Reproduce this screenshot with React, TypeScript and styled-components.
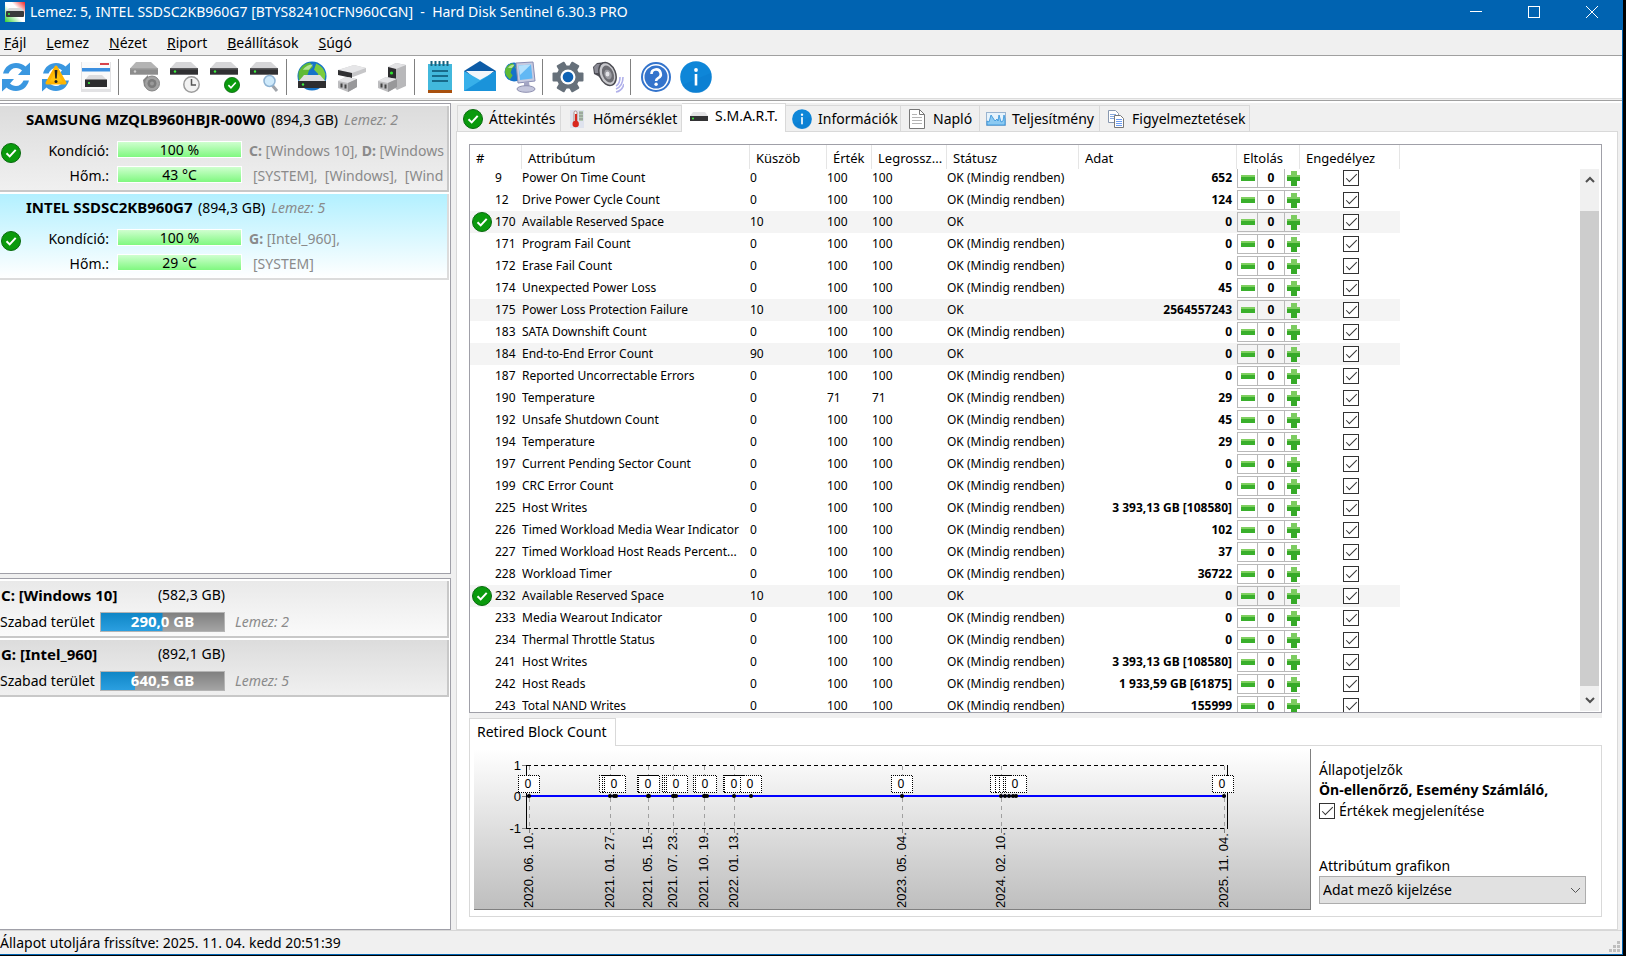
import React, { useEffect, useId, useRef, useState } from 'react';
import styled, { createGlobalStyle, css } from 'styled-components';

const GlobalStyle = createGlobalStyle`
  *, *::before, *::after { box-sizing: border-box; }
  body {
    margin: 0;
    background: #000;
    color: #000;
    font: 14px/20px "Noto Sans", "Open Sans", sans-serif;
  }
  button, select, input { font: inherit; color: inherit; margin: 0; }
  button { background: none; border: 0; padding: 0; }
`;

/* ---------- window frame ---------- */

const Window = styled.div`
  display: flex;
  flex-direction: column;
  height: calc(100vh - 1px);
  min-height: 720px;
  margin: 0 3px 1px 0;
  background: #f0f0f0;
  border-right: 1px solid #0063b1;
  border-bottom: 1px solid #0063b1;
  overflow: hidden;
`;

const TitleBar = styled.header`
  display: flex;
  align-items: center;
  height: 30px;
  padding: 0 1px 6px 5px;
  background: #0063b1;
  color: #fff;
`;

const Title = styled.h1`
  flex: 1;
  margin: 0 0 0 5px;
  font-size: 14px;
  font-weight: 400;
  line-height: 24px;
  white-space: pre;
`;

const WindowButton = styled.button`
  display: grid;
  place-items: center;
  width: 58px;
  height: 22px;
`;

const MenuBar = styled.nav`
  display: flex;
  gap: 20px;
  height: 26px;
  padding: 0 4px;
  border-bottom: 1px solid #a0a0a0;
`;

const MenuButton = styled.button`
  line-height: 24px;
  white-space: nowrap;
  &::first-letter { text-decoration: underline; }
`;

const Toolbar = styled.div`
  display: flex;
  align-items: center;
  height: 42px;
  background: #fff;
`;

const ToolGroup = styled.div`
  display: flex;
  align-items: center;
  gap: 8px;
  height: 36px;
  padding-right: 6px;
  margin-right: 9px;
  border-right: 1px solid #808080;
  &:last-child { border: 0; }
`;

const ToolButton = styled.button`
  width: 32px;
  height: 32px;
  svg { display: block; }
`;

const ToolbarEdge = styled.div`
  height: 5px;
  border-top: 1px solid #dcdcdc;
  border-bottom: 2px solid #fff;
  background: linear-gradient(#f0f0f0 1px, #a0a0a0 1px);
`;

const Workspace = styled.main`
  display: flex;
  flex: 1;
  min-height: 0;
`;

const StatusBar = styled.footer`
  display: flex;
  justify-content: space-between;
  align-items: flex-end;
  height: 24px;
  border-top: 1px solid #d7d7d7;
`;

const StatusText = styled.span`
  line-height: 22px;
  white-space: nowrap;
`;

/* ---------- left column ---------- */

const Sidebar = styled.aside`
  display: flex;
  flex-direction: column;
  gap: 4px;
  flex: none;
  width: 451px;
`;

const ListPane = styled.section<{ $grow: number }>`
  flex: ${(p) => p.$grow} 1 0;
  min-height: 0;
  border: 1px solid #a0a0a8;
  border-left: 0;
  background: #fff;
  overflow: hidden;
`;

const cardFrame = css`
  margin: 2px 1px 0 0;
  border-right: 2px solid #c8c8c8;
  border-bottom: 2px solid #c8c8c8;
  white-space: nowrap;
  overflow: hidden;
`;

const DiskCard = styled.article<{ $selected?: boolean }>`
  ${cardFrame}
  display: grid;
  grid-template-columns: 21px 87px 123px 1fr;
  grid-template-rows: 32px 25px 25px;
  align-items: center;
  height: 86px;
  padding-left: 1px;
  background: ${(p) => (p.$selected ? 'linear-gradient(#b2f0ff, #fff)' : 'linear-gradient(#dcdcdc, #f0f0f0)')};
  border-color: ${(p) => (p.$selected ? '#dcdcdc' : '#c8c8c8')};
`;

const DiskTitle = styled.h2`
  grid-column: 1 / -1;
  margin: 0 0 6px 25px;
  font-size: 14px;
  font-weight: 400;
  word-spacing: normal;
  strong { font-size: 15px; margin-right: 2px; }
`;

const DiskState = styled.span`
  grid-row: 2 / 4;
  grid-column: 1;
  align-self: start;
  padding-top: 5px;
  height: 25px;
  svg { display: block; }
`;

const DiskLabel = styled.span`
  grid-column: 2;
  text-align: right;
`;

const LevelBar = styled.span`
  height: 17px;
  margin: 0 0 2px 8px;
  border: 1px solid #fff;
  background: linear-gradient(#cfffcf, #80f880);
  text-align: center;
  line-height: 15px;
  width: 125px;
`;

const Letters = styled.span<{ $indent?: boolean }>`
  padding-left: ${(p) => (p.$indent ? 21 : 17)}px;
  color: #8a8a8a;
  white-space: pre;
  overflow: hidden;
`;

const Muted = styled.em`
  color: #8a8a8a;
  margin-left: 6px;
`;

const VolumeCard = styled.article<{ $light?: boolean }>`
  ${cardFrame}
  display: grid;
  grid-template-columns: 100px 125px 1fr;
  grid-template-rows: 28px 27px;
  align-items: center;
  height: 57px;
  background: ${(p) => (p.$light ? 'linear-gradient(#e9e9e9, #fafafa)' : 'linear-gradient(#dcdcdc, #f0f0f0)')};
`;

const VolumeName = styled.strong`
  padding-left: 1px;
  font-size: 15px;
`;

const VolumeSize = styled.span`
  text-align: right;
`;

const SpaceBar = styled.span<{ $used: number }>`
  height: 20px;
  border: 1px solid #b4b4b4;
  background:
    linear-gradient(#0f86c6, #2b9fe0) 0 0 / ${(p) => p.$used}% 100% no-repeat,
    linear-gradient(#808080, #a4a4a4);
  color: #fff;
  font-weight: 700;
  font-size: 15px;
  line-height: 17px;
  text-align: center;
`;

const VolumeDisk = styled(Muted)`
  margin-left: 10px;
`;

/* ---------- right column ---------- */

const Detail = styled.section`
  display: flex;
  flex-direction: column;
  flex: 1;
  min-width: 0;
  margin-left: 5px;
  padding-right: 4px;
`;

const TabList = styled.div`
  display: flex;
  align-items: flex-end;
  height: 28px;
  padding-left: 1px;
`;

const Tab = styled.button<{ $width: number }>`
  display: flex;
  align-items: center;
  gap: 6px;
  width: ${(p) => p.$width}px;
  height: 26px;
  padding: 0 0 0 6px;
  border: 1px solid #d9d9d9;
  border-width: 1px 1px 0 0;
  white-space: nowrap;
  svg { flex: none; }
  &:first-child { border-left-width: 1px; padding-left: 5px; }
  &[aria-selected='true'] {
    position: relative;
    height: 29px;
    margin-bottom: -1px;
    padding: 0 0 4px 7px;
    background: #fff;
  }
`;

const TabPage = styled.div`
  display: flex;
  flex-direction: column;
  flex: 1;
  min-height: 0;
  padding: 12px 15px 12px 12px;
  border: 1px solid #d9d9d9;
  background: #fff;
`;

const TableFrame = styled.div`
  display: flex;
  flex: 1;
  min-height: 0;
  border: 1px solid #a0a0a8;
`;

const TableView = styled.div`
  flex: 1;
  overflow: hidden;
`;

const Attributes = styled.table`
  width: 930px;
  table-layout: fixed;
  border-collapse: separate;
  border-spacing: 0;
  font-size: 12px;
  line-height: 20px;
  white-space: nowrap;
`;

const HeadCell = styled.th`
  position: sticky;
  top: 0;
  z-index: 1;
  height: 24px;
  padding: 2px 0 0 6px;
  background: #fff;
  border-right: 1px solid #e5e5e5;
  font-size: 13px;
  font-weight: 400;
  text-align: left;
`;

const Row = styled.tr<{ $shaded: boolean }>`
  height: 22px;
  background: ${(p) => (p.$shaded ? '#f4f4f4' : '#fff')};
`;

const Cell = styled.td`
  padding: 0;
  overflow: hidden;
  text-overflow: ellipsis;
`;

const NumberLine = styled.span`
  display: grid;
  grid-template-columns: 20px 1fr;
  gap: 3px;
  height: 22px;
  padding-left: 2px;
  align-items: center;
  svg { display: block; }
`;

const NumberText = styled.span`
  grid-column: 2;
`;

const DataCell = styled(Cell)`
  padding-right: 5px;
  text-align: right;
  font-weight: 700;
`;

const PlainCell = styled(Cell)`
  text-align: center;
`;

const CheckCell = styled(Cell)`
  padding: 0 0 1px 2px;
  text-align: center;
`;

const Stepper = styled.div`
  display: grid;
  grid-template-columns: 20px 27px 19px;
  height: 20px;
  width: 66px;
  font-weight: 700;
`;

const StepPart = styled.span`
  border: 1px solid #b9b9b9;
  border-right: 0;
  line-height: 18px;
`;

const StepButton = styled.button`
  display: grid;
  place-items: center;
  border: 1px solid #b9b9b9;
  border-right: 0;
`;

const Check = styled.input.attrs({ type: 'checkbox' })`
  appearance: none;
  display: inline-grid;
  place-items: center;
  flex: none;
  width: 16px;
  height: 16px;
  border: 1px solid #333;
  background: #fff;
  vertical-align: middle;
  &:checked::after {
    content: '';
    width: 11px;
    height: 5px;
    margin-top: -4px;
    border: solid #333;
    border-width: 0 0 1px 1px;
    transform: rotate(-45deg);
  }
`;

const Scrollbar = styled.div`
  display: flex;
  flex-direction: column;
  width: 19px;
  margin: 24px 2px 1px 0;
  background: #f0f0f0;
`;

const ScrollButton = styled.button`
  display: grid;
  place-items: center;
  height: 21px;
`;

const ScrollTrack = styled.div`
  flex: 1;
  padding: 21px 0 4px;
`;

const ScrollThumb = styled.div`
  height: 100%;
  background: #cdcdcd;
`;

const Splitter = styled.div`
  height: 5px;
  background: #f0f0f0;
`;

const GraphTabs = styled.div`
  height: 27px;
  display: flex;
`;

const GraphTab = styled.button`
  position: relative;
  height: 28px;
  padding: 0 8px 2px 7px;
  border: 1px solid #d9d9d9;
  border-bottom: 0;
  background: #fff;
`;

const GraphPanel = styled.section`
  display: flex;
  height: 172px;
  padding: 3px 0 0 4px;
  border: 1px solid #d9d9d9;
`;

const ChartArea = styled.div`
  flex: 1;
  min-width: 0;
  height: 161px;
  border-right: 1px solid #808080;
  border-bottom: 1px solid #808080;
  background: linear-gradient(#fff, #bebebe);
  overflow: hidden;
  svg { display: block; }
`;

const GraphSide = styled.div`
  display: flex;
  flex-direction: column;
  flex: none;
  width: 290px;
  padding: 11px 15px 0 8px;
  white-space: nowrap;
`;

const CheckLabel = styled.label`
  display: flex;
  align-items: center;
  gap: 4px;
  height: 22px;
`;

const SelectLabel = styled.label`
  margin-top: 34px;
`;

const SelectBox = styled.span`
  display: grid;
  align-items: center;
  svg { grid-area: 1 / 1; justify-self: end; margin-right: 5px; pointer-events: none; }
`;

const Select = styled.select`
  grid-area: 1 / 1;
  appearance: none;
  height: 28px;
  padding: 0 24px 0 3px;
  border: 1px solid #adadad;
  border-radius: 0;
  background: #e1e1e1;
`;

/* ---------- icons ---------- */

const OkIcon = ({ size = 20 }: { size?: number }) => (
  <svg width={size} height={size} viewBox="0 0 20 20">
    <circle cx="10" cy="10" r="9.5" fill="#0a9a0d" stroke="#0a6a10" />
    <path d="M5.5 10.2l3.2 3.2 6-6.6" fill="none" stroke="#fff" strokeWidth="2" />
  </svg>
);

const InfoIcon = ({ size = 32 }: { size?: number }) => (
  <svg width={size} height={size} viewBox="0 0 32 32">
    <circle cx="16" cy="16" r="15.8" fill="#0e86d8" />
    <path d="M2 24A16 16 0 0 0 30 24L31 12Z" fill="#0a74c6" opacity=".3" />
    <circle cx="16" cy="9" r="1.9" fill="#fff" />
    <rect x="14.7" y="13" width="2.6" height="11.5" fill="#fff" />
  </svg>
);

const Drive = ({ gray = false }: { gray?: boolean }) => (
  <g>
    <path d="M8 1H23L30 7.500H2Z" fill={gray ? '#b4b4b4' : '#d6d6d8'} />
    <rect x="2" y="7" width="28" height="6.500" fill={gray ? '#a0a0a0' : '#58585a'} />
    <rect x="2" y="8.500" width="28" height="5" fill={gray ? '#8c8c8c' : '#303032'} />
    <circle cx="7" cy="10.500" r="1.200" fill={gray ? '#d0d0d0' : '#3df03d'} />
  </g>
);

const Refresh = () => (
  <g fill="#3a97e0">
    <path d="M3 12.500C5 5.500 10 2 16 2c4 0 7 1.400 9.500 3.500L30 1.500V14H18l4-4.500C20.500 8 18.500 7 16 7c-3.400 0-6 2-7.500 5.500Z" />
    <path d="M29 19.500C27 26.500 22 30 16 30c-4 0-7-1.400-9.500-3.500L2 30.500V18h12l-4 4.500c1.500 1.500 3.500 2.500 6 2.500 3.400 0 6-2 7.500-5.500Z" />
  </g>
);

const Earth = ({ cx, cy, r }: { cx: number; cy: number; r: number }) => (
  <g>
    <circle cx={cx} cy={cy} r={r} fill="#1673c8" />
    <g transform={`translate(${cx} ${cy}) scale(${r / 14})`}>
      <path d="M-13 -4Q-9 -12 -2 -13L1 -9L-3 -5L-5 1L-2 5L-6 11Q-12 7 -13 2Z" fill="#5fba35" />
      <path d="M4 -12Q11 -9 13 -2L12 5L8 8L4 3L6 -2L2 -6Z" fill="#7ccc3c" />
      <path d="M-9 -6Q-5 -11 1 -11L-3 -6Z" fill="#d8f5c0" opacity=".7" />
    </g>
  </g>
);

const Plug = () => (
  <g>
    <path d="M2 20L10 16L21 18L21 26L12 31L2 27Z" fill="#bdbdbf" />
    <path d="M2 20L10 16L21 18L12 22Z" fill="#e4e4e6" />
    <path d="M12 22L21 18V26L12 31Z" fill="#98989a" />
    <rect x="4.500" y="22.500" width="2" height="4" fill="#444" />
    <rect x="8.500" y="23.500" width="2" height="4" fill="#444" />
  </g>
);

const SpeakerShape = () => (
  <g>
    <path d="M1 6L5 2L14 1L14 22L6 15L2 13Z" fill="#4c4c54" />
    <path d="M2 6L5 3L8 3L7 12L3 12Z" fill="#8a8a94" />
    <ellipse cx="15.500" cy="13" rx="8" ry="12" transform="rotate(-22 15.500 13)" fill="#c8c8cc" stroke="#4c4c52" strokeWidth="1.500" />
    <ellipse cx="16" cy="13" rx="5.500" ry="9" transform="rotate(-22 16 13)" fill="#6c6c72" />
    <ellipse cx="16" cy="13.500" rx="3.500" ry="5" transform="rotate(-22 16 13.500)" fill="#9c9ca2" />
    <ellipse cx="15.500" cy="13" rx="2" ry="2.500" fill="#e4e4e8" />
  </g>
);

const tool = (body: React.ReactNode) => (
  <svg width="32" height="32" viewBox="0 0 32 32">{body}</svg>
);

const toolGroups: { label: string; icon: React.ReactNode }[][] = [
  [
    { label: 'Frissítés', icon: tool(<Refresh />) },
    {
      label: 'Frissítés figyelmeztetéssel',
      icon: tool(
        <>
          <Refresh />
          <path d="M16 6L25 22H7Z" fill="#ffc20e" stroke="#ffb400" strokeWidth="3" strokeLinejoin="round" />
          <path d="M14.600 9h2.800l-.6 8.500h-1.600z" fill="#222" />
          <circle cx="16" cy="20.500" r="1.500" fill="#222" />
        </>,
      ),
    },
    {
      label: 'Ablak',
      icon: tool(
        <>
          <rect x="1" y="1" width="30" height="30" fill="#e2e2e4" />
          <rect x="2" y="1" width="28" height="27" fill="#fafafa" />
          <rect x="20" y="2" width="9" height="2" fill="#d8434a" />
          <rect x="2" y="7" width="28" height="3.500" fill="#3b8fe0" />
          <path d="M9 14H22L27 19H5Z" fill="#dcdcde" />
          <rect x="5" y="18.500" width="22" height="7.500" fill="#2c2c2e" />
          <circle cx="9" cy="22" r="1.100" fill="#3df03d" />
        </>,
      ),
    },
  ],
  [
    {
      label: 'Lemez hangja',
      icon: tool(
        <>
          <Drive gray />
          <path d="M15 19L20 14V28L16 25Z" fill="#858585" />
          <circle cx="24" cy="22.500" r="7.500" fill="#a2a2a2" stroke="#858585" />
          <circle cx="24" cy="22.500" r="4.500" fill="#7c7c7c" />
          <circle cx="24" cy="22.500" r="2" fill="#9a9a9a" />
        </>,
      ),
    },
    {
      label: 'Ütemezés',
      icon: tool(
        <>
          <Drive />
          <circle cx="23.500" cy="23.500" r="7.700" fill="#f2f2f2" stroke="#9c9c9c" strokeWidth="1.500" />
          <path d="M23.500 18V24H28" fill="none" stroke="#555" strokeWidth="1.500" />
        </>,
      ),
    },
    {
      label: 'Ellenőrzés',
      icon: tool(
        <>
          <Drive />
          <g transform="translate(16 16) scale(.8)"><OkIcon /></g>
        </>,
      ),
    },
    {
      label: 'Keresés',
      icon: tool(
        <>
          <Drive />
          <path d="M24 24L29 30" stroke="#a0a4aa" strokeWidth="3" />
          <circle cx="21.500" cy="20" r="5.500" fill="#cfeafb" stroke="#8fb4d4" strokeWidth="1.500" />
        </>,
      ),
    },
  ],
  [
    {
      label: 'Hálózati lemezek',
      icon: tool(
        <>
          <Earth cx={16} cy={15} r={14.500} />
          <path d="M8 14H24L30 21H2Z" fill="#dedee0" />
          <rect x="2" y="20" width="28" height="7" fill="#2e2e30" />
          <circle cx="7" cy="23.500" r="1.200" fill="#3df03d" />
        </>,
      ),
    },
    {
      label: 'Külső lemez',
      icon: tool(
        <>
          <path d="M2 9L18 4L30 7V11L17 16L3 14Z" fill="#c6c6c8" />
          <path d="M2 9L18 4L30 7L16 12Z" fill="#e6e6e8" />
          <path d="M2 9L16 12V17L2 14Z" fill="#303032" />
          <Plug />
        </>,
      ),
    },
    {
      label: 'Dokkoló',
      icon: tool(
        <>
          <path d="M12 6L20 2L30 4V25L21 29L12 20Z" fill="#b8b8ba" />
          <path d="M12 6L20 2L30 4L20 8Z" fill="#e2e2e4" />
          <path d="M12 6L20 8V20H12Z" fill="#2c2c2e" />
          <circle cx="15.500" cy="12" r="1.600" fill="#2ee62e" />
          <Plug />
        </>,
      ),
    },
  ],
  [
    {
      label: 'Jegyzet',
      icon: tool(
        <>
          <rect x="4" y="3" width="24" height="27" fill="#42b8dc" />
          <rect x="4" y="29" width="24" height="3" fill="#a8500e" />
          <path d="M7.500 0V5M11.500 0V5M15.500 0V5M19.500 0V5M23.500 0V5" stroke="#17607c" strokeWidth="2" />
          <path d="M8 10H24M8 15H24M8 20H24" stroke="#176a8a" strokeWidth="2" />
        </>,
      ),
    },
    {
      label: 'E-mail',
      icon: tool(
        <>
          <path d="M0 10L16 0L32 10V16H0Z" fill="#0c5ba6" />
          <path d="M2 10H30L16 22Z" fill="#f2f6fa" />
          <path d="M0 10L16 19L32 10V30H0Z" fill="#37b0ea" />
          <path d="M0 30L32 10V30Z" fill="#1a93da" />
        </>,
      ),
    },
    {
      label: 'Hálózat',
      icon: tool(
        <>
          <Earth cx={10} cy={11} r={9.500} />
          <path d="M12 2L29 1L31 20L14 22Z" fill="#c8cbe0" stroke="#8a8eb4" />
          <path d="M14.500 4.500L27 3.500L28.500 17.500L16 19Z" fill="#62b8f4" />
          <path d="M14.500 4.500L27 3.500L16 14Z" fill="#b4e0fc" />
          <path d="M20 21H25L26 27H20Z" fill="#a4a6c4" />
          <ellipse cx="22" cy="28" rx="9" ry="3.300" fill="#c4c6dc" stroke="#8e90b0" />
        </>,
      ),
    },
  ],
  [
    {
      label: 'Beállítások',
      icon: tool(
        <>
          <g fill="#66707a">
            {[0, 60, 120].map((a) => (
              <rect key={a} x="11.500" y="0.500" width="9" height="31" rx="1" transform={`rotate(${a + 30} 16 16)`} />
            ))}
            <circle cx="16" cy="16" r="11.500" />
          </g>
          <circle cx="16" cy="16" r="7.500" fill="#fff" />
          <circle cx="16" cy="16" r="5.300" fill="#0f62b4" />
        </>,
      ),
    },
    {
      label: 'Hang',
      icon: tool(
        <>
          <path d="M24 25Q28 23 28 16M24 28Q31 25 31 16M24 31Q30 30 32 23" fill="none" stroke="#b0b0ea" strokeWidth="1.600" />
          <SpeakerShape />
        </>,
      ),
    },
  ],
  [
    {
      label: 'Súgó',
      icon: tool(
        <>
          <circle cx="16" cy="16" r="14" fill="#fff" stroke="#3474cc" strokeWidth="2" />
          <circle cx="16" cy="16" r="11.500" fill="#3474cc" />
          <path d="M11.500 13a4.600 4.600 0 1 1 6.600 4.100c-1.500.8-2 1.500-2 3" fill="none" stroke="#fff" strokeWidth="2.600" />
          <circle cx="16.100" cy="23.300" r="1.700" fill="#fff" />
        </>,
      ),
    },
    { label: 'Információ', icon: tool(<InfoIcon />) },
  ],
];

const AppIcon = () => (
  <svg width="20" height="20" viewBox="0 0 20 20">
    <defs>
      <linearGradient id="app-bg" x1="0" y1="1" x2="1" y2="0">
        <stop offset="0" stopColor="#2fd02f" />
        <stop offset=".45" stopColor="#fff" />
        <stop offset=".65" stopColor="#fff" />
        <stop offset="1" stopColor="#f02020" />
      </linearGradient>
    </defs>
    <rect width="20" height="20" fill="url(#app-bg)" />
    <path d="M4 6H16L19 9H1Z" fill="#d8d8d8" />
    <rect x="1" y="9" width="18" height="6" rx="1" fill="#3a3a3c" />
    <circle cx="4" cy="12" r="1" fill="#3df03d" />
  </svg>
);

const tabIcon = (body: React.ReactNode) => (
  <svg width="20" height="20" viewBox="0 0 20 20">{body}</svg>
);

const tabs = [
  { label: 'Áttekintés', width: 104, icon: <OkIcon /> },
  {
    label: 'Hőmérséklet',
    width: 121,
    icon: tabIcon(
      <>
        <rect x="3" y="1" width="14" height="18" fill="#dfe3ee" />
        <rect x="12" y="2" width="4" height="10" fill="#b4c8b4" />
        <path d="M12 4H16M12 7H16M12 10H16" stroke="#888" />
        <rect x="7" y="2" width="3" height="12" rx="1.500" fill="#f6f6f6" stroke="#a88" />
        <rect x="8" y="5" width="2" height="9" fill="#d8271e" />
        <circle cx="8.700" cy="15" r="3.200" fill="#d8271e" />
      </>,
    ),
  },
  {
    label: 'S.M.A.R.T.',
    width: 104,
    icon: tabIcon(
      <>
        <path d="M4 6H16L19 10H1Z" fill="#e4e4e6" />
        <rect x="1" y="10" width="18" height="5" fill="#333335" />
        <circle cx="4" cy="12.500" r="1" fill="#3df03d" />
      </>,
    ),
  },
  { label: 'Információk', width: 115, icon: <InfoIcon size={20} /> },
  {
    label: 'Napló',
    width: 79,
    icon: tabIcon(
      <>
        <path d="M2.500 .5H12.500L17.500 5.500V19.500H2.500Z" fill="#fff" stroke="#777" />
        <path d="M12.500 .5V5.500H17.500" fill="none" stroke="#777" />
        <path d="M5 5.500H10M5 8.500H15M5 11.500H15M5 14.500H15" stroke="#b4b4b4" />
      </>,
    ),
  },
  {
    label: 'Teljesítmény',
    width: 120,
    icon: tabIcon(
      <>
        <rect x=".5" y="3.500" width="19" height="13" fill="#e6f3fc" stroke="#9ab4d0" />
        <path d="M1 16V12L3 13L5 6L7 9L9 12L11 10L12 12L13 6L15 13L17 12L18 6L19 10V16Z" fill="#8ccaf2" stroke="#2f8fd8" strokeWidth=".8" />
      </>,
    ),
  },
  {
    label: 'Figyelmeztetések',
    width: 150,
    icon: tabIcon(
      <>
        <path d="M2.500 1.500H9.500L12.500 4.500V13.500H2.500Z" fill="#fff" stroke="#8898b0" />
        <path d="M4 5.500H10M4 7.500H10M4 9.500H10" stroke="#88aae0" />
        <path d="M8.500 6.500H14.500L17.500 9.500V18.500H8.500Z" fill="#fff" stroke="#777" />
        <path d="M10 10.500H16M10 12.500H16M10 14.500H16M10 16.500H16" stroke="#6c9cf0" />
      </>,
    ),
  },
];

/* ---------- data ---------- */

const menus = ['Fájl', 'Lemez', 'Nézet', 'Riport', 'Beállítások', 'Súgó'];

const always = 'OK (Mindig rendben)';

type Attribute = {
  id: number;
  name: string;
  threshold?: number;
  value?: number;
  data: string;
  checked?: boolean;
};

const attributes: Attribute[] = [
  { id: 9, name: 'Power On Time Count', data: '652' },
  { id: 12, name: 'Drive Power Cycle Count', data: '124' },
  { id: 170, name: 'Available Reserved Space', threshold: 10, data: '0', checked: true },
  { id: 171, name: 'Program Fail Count', data: '0' },
  { id: 172, name: 'Erase Fail Count', data: '0' },
  { id: 174, name: 'Unexpected Power Loss', data: '45' },
  { id: 175, name: 'Power Loss Protection Failure', threshold: 10, data: '2564557243' },
  { id: 183, name: 'SATA Downshift Count', data: '0' },
  { id: 184, name: 'End-to-End Error Count', threshold: 90, data: '0' },
  { id: 187, name: 'Reported Uncorrectable Errors', data: '0' },
  { id: 190, name: 'Temperature', value: 71, data: '29' },
  { id: 192, name: 'Unsafe Shutdown Count', data: '45' },
  { id: 194, name: 'Temperature', data: '29' },
  { id: 197, name: 'Current Pending Sector Count', data: '0' },
  { id: 199, name: 'CRC Error Count', data: '0' },
  { id: 225, name: 'Host Writes', data: '3 393,13 GB [108580]' },
  { id: 226, name: 'Timed Workload Media Wear Indicator', data: '102' },
  { id: 227, name: 'Timed Workload Host Reads Percent...', data: '37' },
  { id: 228, name: 'Workload Timer', data: '36722' },
  { id: 232, name: 'Available Reserved Space', threshold: 10, data: '0', checked: true },
  { id: 233, name: 'Media Wearout Indicator', data: '0' },
  { id: 234, name: 'Thermal Throttle Status', data: '0' },
  { id: 241, name: 'Host Writes', data: '3 393,13 GB [108580]' },
  { id: 242, name: 'Host Reads', data: '1 933,59 GB [61875]' },
  { id: 243, name: 'Total NAND Writes', data: '155999' },
];

const columns = [
  ['#', 52], ['Attribútum', 228], ['Küszöb', 77], ['Érték', 45], ['Legrossz...', 75],
  ['Státusz', 132], ['Adat', 158], ['Eltolás', 63], ['Engedélyez', 100],
] as const;

const ColumnWidth = styled.col<{ $width: number }>`
  width: ${(p) => p.$width}px;
`;

function AttributeRow({ item }: { item: Attribute }) {
  const [enabled, setEnabled] = useState(true);
  const [offset, setOffset] = useState(0);
  const value = item.value ?? 100;
  return (
    <Row $shaded={item.threshold !== undefined}>
      <Cell>
        <NumberLine>
          {item.checked && <OkIcon />}
          <NumberText>{item.id}</NumberText>
        </NumberLine>
      </Cell>
      <Cell>{item.name}</Cell>
      <Cell>{item.threshold ?? 0}</Cell>
      <Cell>{value}</Cell>
      <Cell>{value}</Cell>
      <Cell>{item.threshold === undefined ? always : 'OK'}</Cell>
      <DataCell>{item.data}</DataCell>
      <PlainCell>
        <Stepper>
          <StepButton aria-label="Csökkentés" onClick={() => setOffset(offset - 1)}>
            <svg width="14" height="6" viewBox="0 0 14 6"><rect width="14" height="3" fill="#7fd060" /><rect y="2" width="14" height="4" fill="#3ab02c" /></svg>
          </StepButton>
          <StepPart>{offset}</StepPart>
          <StepButton aria-label="Növelés" onClick={() => setOffset(offset + 1)}>
            <svg width="14" height="16" viewBox="0 0 14 16">
              <path d="M4 1H10V5H14V11H10V16H4V11H0V5H4Z" fill="#36aa28" />
              <path d="M4 1H10V5H14V7H0V5H4Z" fill="#7ccc60" />
            </svg>
          </StepButton>
        </Stepper>
      </PlainCell>
      <CheckCell>
        <Check aria-label={`${item.name} engedélyezése`} checked={enabled} onChange={(e) => setEnabled(e.target.checked)} />
      </CheckCell>
    </Row>
  );
}

/* ---------- chart ---------- */

const dates: [number, string][] = [
  [55, '2020. 06. 10.'], [136, '2021. 01. 27.'], [174, '2021. 05. 15.'], [199, '2021. 07. 23.'],
  [230, '2021. 10. 19.'], [260, '2022. 01. 13.'], [428, '2023. 05. 04.'], [527, '2024. 02. 10.'],
  [750, '2025. 11. 04.'],
];
const points = [55, 136, 140, 142, 174, 175, 199, 200, 202, 230, 231, 233, 260, 277, 428, 527, 531, 535, 539, 542, 750];
const valueBoxes: [number, boolean][] = [
  [44, true], [125, false], [128, false], [130, true], [163, false], [164, true], [188, false], [190, false],
  [192, true], [219, false], [221, true], [249, false], [250, true], [266, true], [417, true],
  [516, false], [521, false], [525, false], [529, false], [531, true], [738, true],
];

const ChartText = styled.text`
  font-family: 'Liberation Sans', Arial, sans-serif;
  font-size: 13px;
`;

const ValueText = styled.text`
  font-size: 12px;
  text-anchor: middle;
`;

const RetiredBlocksChart = () => (
  <svg width="836" height="160" viewBox="0 0 836 160" role="img" aria-label="Retired Block Count">
    {dates.map(([x, label]) => (
      <g key={label}>
        <path d={`M${x + 0.5} 17V79`} stroke="#a0a0a0" strokeDasharray="4 4" />
        <path d={`M${x + 0.5} 79V84`} stroke="#808080" />
        <ChartText transform={`translate(${x + 4} 159) rotate(-90)`}>{label}</ChartText>
      </g>
    ))}
    <path d="M53 16.500H753M53 79.500H753" stroke="#000" strokeDasharray="4 3" />
    <path d="M48 16.500H53M48 47.500H53M48 79.500H53" stroke="#808080" />
    <path d="M52.500 16V80M753.500 16V80" stroke="#000" />
    <ChartText x="47" y="21" textAnchor="end">1</ChartText>
    <ChartText x="47" y="52" textAnchor="end">0</ChartText>
    <ChartText x="47" y="84" textAnchor="end">-1</ChartText>
    <path d="M53 47H752" stroke="#0000ff" strokeWidth="2" />
    {points.map((x) => <circle key={x} cx={x} cy="47" r="2" fill="#000" />)}
    {valueBoxes.map(([x, labelled]) => (
      <g key={x}>
        <rect
          x={x + 0.5}
          y="26.500"
          width="21"
          height="17"
          fill="#fff"
          stroke="#000"
          strokeDasharray="1 1"
          strokeDashoffset="0.5"
          shapeRendering="crispEdges"
        />
        {labelled && <ValueText x={x + 10} y="39">0</ValueText>}
      </g>
    ))}
  </svg>
);

/* ---------- page ---------- */

export default function App() {
  const view = useRef<HTMLDivElement>(null);
  const [showValues, setShowValues] = useState(true);
  const selectId = useId();

  useEffect(() => {
    if (view.current) view.current.scrollTop = 2;
  }, []);

  return (
    <Window>
      <GlobalStyle />
      <TitleBar>
        <AppIcon />
        <Title>{'Lemez: 5, INTEL SSDSC2KB960G7 [BTYS82410CFN960CGN]  -  Hard Disk Sentinel 6.30.3 PRO'}</Title>
        <WindowButton aria-label="Kis méret">
          <svg width="12" height="12"><path d="M0 5.500H12" stroke="#fff" /></svg>
        </WindowButton>
        <WindowButton aria-label="Teljes méret">
          <svg width="12" height="12"><rect x=".5" y=".5" width="11" height="11" fill="none" stroke="#fff" /></svg>
        </WindowButton>
        <WindowButton aria-label="Bezárás">
          <svg width="12" height="12"><path d="M0 0L12 12M12 0L0 12" stroke="#fff" /></svg>
        </WindowButton>
      </TitleBar>
      <MenuBar>
        {menus.map((m) => <MenuButton key={m}>{m}</MenuButton>)}
      </MenuBar>
      <Toolbar>
        {toolGroups.map((group, i) => (
          <ToolGroup key={i}>
            {group.map((t) => <ToolButton key={t.label} aria-label={t.label}>{t.icon}</ToolButton>)}
          </ToolGroup>
        ))}
      </Toolbar>
      <ToolbarEdge />

      <Workspace>
        <Sidebar>
          <ListPane $grow={471}>
            <DiskCard>
              <DiskTitle><strong>SAMSUNG MZQLB960HBJR-00W0</strong> (894,3 GB)<Muted>Lemez: 2</Muted></DiskTitle>
              <DiskState><OkIcon /></DiskState>
              <DiskLabel>Kondíció:</DiskLabel>
              <LevelBar>100 %</LevelBar>
              <Letters><b>C:</b> [Windows 10], <b>D:</b> [Windows</Letters>
              <DiskLabel>Hőm.:</DiskLabel>
              <LevelBar>43 °C</LevelBar>
              <Letters $indent>{'[SYSTEM],  [Windows],  [Wind'}</Letters>
            </DiskCard>
            <DiskCard $selected>
              <DiskTitle><strong>INTEL SSDSC2KB960G7</strong> (894,3 GB)<Muted>Lemez: 5</Muted></DiskTitle>
              <DiskState><OkIcon /></DiskState>
              <DiskLabel>Kondíció:</DiskLabel>
              <LevelBar>100 %</LevelBar>
              <Letters><b>G:</b> [Intel_960],</Letters>
              <DiskLabel>Hőm.:</DiskLabel>
              <LevelBar>29 °C</LevelBar>
              <Letters $indent>[SYSTEM]</Letters>
            </DiskCard>
          </ListPane>
          <ListPane $grow={352}>
            <VolumeCard $light>
              <VolumeName>C: [Windows 10]</VolumeName>
              <VolumeSize>(582,3 GB)</VolumeSize>
              <span />
              <span>Szabad terület</span>
              <SpaceBar $used={50}>290,0 GB</SpaceBar>
              <VolumeDisk>Lemez: 2</VolumeDisk>
            </VolumeCard>
            <VolumeCard>
              <VolumeName>G: [Intel_960]</VolumeName>
              <VolumeSize>(892,1 GB)</VolumeSize>
              <span />
              <span>Szabad terület</span>
              <SpaceBar $used={28}>640,5 GB</SpaceBar>
              <VolumeDisk>Lemez: 5</VolumeDisk>
            </VolumeCard>
          </ListPane>
        </Sidebar>

        <Detail>
          <TabList role="tablist">
            {tabs.map((t) => (
              <Tab key={t.label} role="tab" $width={t.width} aria-selected={t.label === 'S.M.A.R.T.'}>
                {t.icon}
                {t.label}
              </Tab>
            ))}
          </TabList>
          <TabPage>
            <TableFrame>
              <TableView ref={view}>
                <Attributes>
                  <colgroup>
                    {columns.map(([name, width]) => <ColumnWidth key={name} $width={width} />)}
                  </colgroup>
                  <thead>
                    <tr>{columns.map(([name]) => <HeadCell key={name}>{name}</HeadCell>)}</tr>
                  </thead>
                  <tbody>
                    {attributes.map((a) => <AttributeRow key={a.id} item={a} />)}
                  </tbody>
                </Attributes>
              </TableView>
              <Scrollbar>
                <ScrollButton aria-label="Görgetés fel">
                  <svg width="10" height="7"><path d="M1 6L5 2L9 6" fill="none" stroke="#505050" strokeWidth="2" /></svg>
                </ScrollButton>
                <ScrollTrack><ScrollThumb /></ScrollTrack>
                <ScrollButton aria-label="Görgetés le">
                  <svg width="10" height="7"><path d="M1 1L5 5L9 1" fill="none" stroke="#505050" strokeWidth="2" /></svg>
                </ScrollButton>
              </Scrollbar>
            </TableFrame>
            <Splitter />
            <GraphTabs role="tablist">
              <GraphTab role="tab" aria-selected="true">Retired Block Count</GraphTab>
            </GraphTabs>
            <GraphPanel>
              <ChartArea><RetiredBlocksChart /></ChartArea>
              <GraphSide>
                <span>Állapotjelzők</span>
                <strong>Ön-ellenőrző, Esemény Számláló,</strong>
                <CheckLabel>
                  <Check checked={showValues} onChange={(e) => setShowValues(e.target.checked)} />
                  Értékek megjelenítése
                </CheckLabel>
                <SelectLabel htmlFor={selectId}>Attribútum grafikon</SelectLabel>
                <SelectBox>
                  <Select id={selectId}><option>Adat mező kijelzése</option></Select>
                  <svg width="11" height="7"><path d="M1 1L5.500 5.500L10 1" fill="none" stroke="#555" /></svg>
                </SelectBox>
              </GraphSide>
            </GraphPanel>
          </TabPage>
        </Detail>
      </Workspace>

      <StatusBar>
        <StatusText>Állapot utoljára frissítve: 2025. 11. 04. kedd 20:51:39</StatusText>
        <svg width="13" height="13" viewBox="0 0 13 13">
          <path d="M8 0h3v3h-3zM8 4h3v3h-3zM8 8h3v3h-3zM4 4h3v3h-3zM4 8h3v3h-3zM0 8h3v3h-3z" fill="#bfbfbf" />
        </svg>
      </StatusBar>
    </Window>
  );
}
